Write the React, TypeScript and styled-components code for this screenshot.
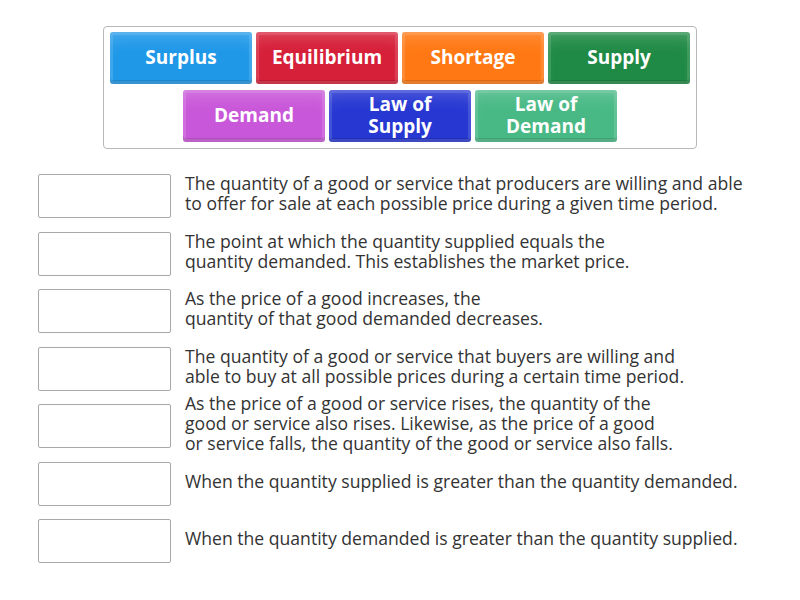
import styled, { createGlobalStyle } from 'styled-components'

const GlobalStyle = createGlobalStyle`
  body {
    margin: 0;
    background: #fff;
    font-family: 'Open Sans', 'Liberation Sans', sans-serif;
  }
`

const Page = styled.div`
  width: 800px;
  height: 600px;
  padding-top: 26px;
  box-sizing: border-box;
`

const TileBank = styled.div`
  width: 594px;
  margin: 0 0 0 103px;
  box-sizing: border-box;
  border: 1px solid #b8b8b8;
  border-radius: 4px;
  padding: 5px 6px 6px;
  display: flex;
  flex-wrap: wrap;
  justify-content: center;
  gap: 6px 4px;
`

const Tile = styled.div<{ $color: string }>`
  width: 142px;
  height: 52px;
  box-sizing: border-box;
  border-radius: 3px;
  background: ${(p) => p.$color};
  box-shadow:
    inset 0 0 0 3px rgba(255, 255, 255, 0.12),
    inset 0 -4px 0 rgba(0, 0, 0, 0.12),
    inset 0 14px 18px -10px rgba(255, 255, 255, 0.25);
  color: #fff;
  font-weight: 700;
  font-size: 19px;
  line-height: 22px;
  text-align: center;
  display: flex;
  align-items: center;
  justify-content: center;
  padding-bottom: 2px;
`

const List = styled.div`
  margin: 25px 0 0 38px;
  display: flex;
  flex-direction: column;
  gap: 13.5px;
`

const Row = styled.div`
  display: flex;
  align-items: center;
  gap: 14px;
  height: 44px;
`

const DropBox = styled.div`
  width: 133px;
  height: 44px;
  flex-shrink: 0;
  box-sizing: border-box;
  border: 1px solid #a8a8a8;
  border-radius: 2px;
  background: #fff;
`

const Definition = styled.div`
  font-size: 17.6px;
  line-height: 20px;
  color: #333;
  white-space: nowrap;
  margin-top: -6px;
`

const tiles = [
  { label: 'Surplus', color: '#1f98e8' },
  { label: 'Equilibrium', color: '#d61f38' },
  { label: 'Shortage', color: '#ff7813' },
  { label: 'Supply', color: '#1f8a45' },
  { label: 'Demand', color: '#c957d9' },
  { label: 'Law of\nSupply', color: '#2637d2' },
  { label: 'Law of\nDemand', color: '#48b985' },
]

const definitions = [
  'The quantity of a good or service that producers are willing and able\nto offer for sale at each possible price during a given time period.',
  'The point at which the quantity supplied equals the\nquantity demanded. This establishes the market price.',
  'As the price of a good increases, the\nquantity of that good demanded decreases.',
  'The quantity of a good or service that buyers are willing and\nable to buy at all possible prices during a certain time period.',
  'As the price of a good or service rises, the quantity of the\ngood or service also rises. Likewise, as the price of a good\nor service falls, the quantity of the good or service also falls.',
  'When the quantity supplied is greater than the quantity demanded.',
  'When the quantity demanded is greater than the quantity supplied.',
]

const Lines = ({ text }: { text: string }) => (
  <>
    {text.split('\n').map((line, i) => (
      <span key={i}>
        {i > 0 && <br />}
        {line}
      </span>
    ))}
  </>
)

export default function App() {
  return (
    <Page>
      <GlobalStyle />
      <TileBank>
        {tiles.map((t) => (
          <Tile key={t.label} $color={t.color}>
            <div>
              <Lines text={t.label} />
            </div>
          </Tile>
        ))}
      </TileBank>
      <List>
        {definitions.map((d, i) => (
          <Row key={i}>
            <DropBox />
            <Definition>
              <Lines text={d} />
            </Definition>
          </Row>
        ))}
      </List>
    </Page>
  )
}
